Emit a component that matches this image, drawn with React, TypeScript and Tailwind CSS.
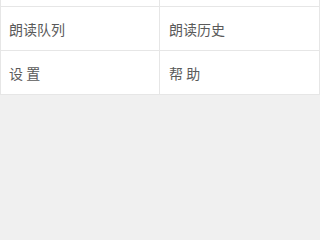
import React from "react";

const rows: [string, string][] = [
  ["朗读队列", "朗读历史"],
  ["设 置", "帮 助"],
];

export default function App() {
  return (
    <div
      className="w-[320px] h-[240px] bg-[#f0f0f0] overflow-hidden"
      style={{ fontFamily: '"Noto Sans CJK SC", "Noto Sans", sans-serif' }}
    >
      <div className="grid grid-cols-2 bg-white">
        <div className="h-[7px] border-l border-r border-b border-[#e6e6e6]" />
        <div className="h-[7px] border-r border-b border-[#e6e6e6]" />
        {rows.map(([a, b]) => (
          <React.Fragment key={a}>
            <div className="h-[44px] flex items-center pl-2 pt-px border-l border-r border-b border-[#e6e6e6] text-[14px] text-[#5a5a5a]">
              {a}
            </div>
            <div className="h-[44px] flex items-center pl-[9px] pt-px border-r border-b border-[#e6e6e6] text-[14px] text-[#5a5a5a]">
              {b}
            </div>
          </React.Fragment>
        ))}
      </div>
    </div>
  );
}
